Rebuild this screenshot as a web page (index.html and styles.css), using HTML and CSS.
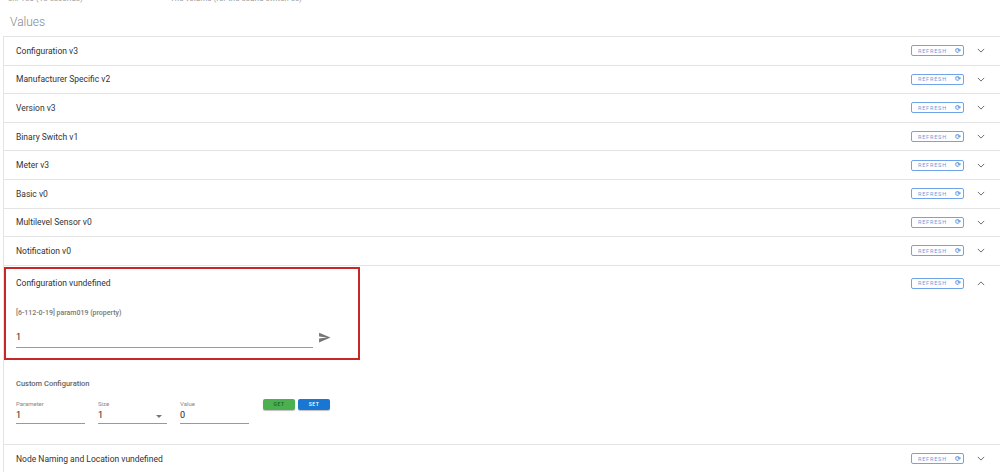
FILE: index.html
```html
<!DOCTYPE html>
<html lang="en">
<head>
  <meta charset="UTF-8">
  <meta name="viewport" content="width=device-width, initial-scale=1.0">
  <title>Node values</title>
  <link rel="stylesheet" href="styles.css">
</head>
<body>

  <div class="linha-topo">
    <span class="topo-a">ch: 180 (18 seconds)</span>
    <span class="topo-b">The volume (for the sound switch cc)</span>
  </div>

  <h2 class="titulo-secao">Values</h2>

  <div class="acordeao">

    <div class="painel">
      <div class="cabecalho">
        <span class="nome">Configuration v3</span>
        <button class="botao-refresh">REFRESH <span class="icone-refresh">&#10227;</span></button>
        <svg class="seta" viewBox="0 0 10 6"><polyline points="1,1 5,5 9,1"/></svg>
      </div>
    </div>

    <div class="painel">
      <div class="cabecalho">
        <span class="nome">Manufacturer Specific v2</span>
        <button class="botao-refresh">REFRESH <span class="icone-refresh">&#10227;</span></button>
        <svg class="seta" viewBox="0 0 10 6"><polyline points="1,1 5,5 9,1"/></svg>
      </div>
    </div>

    <div class="painel">
      <div class="cabecalho">
        <span class="nome">Version v3</span>
        <button class="botao-refresh">REFRESH <span class="icone-refresh">&#10227;</span></button>
        <svg class="seta" viewBox="0 0 10 6"><polyline points="1,1 5,5 9,1"/></svg>
      </div>
    </div>

    <div class="painel">
      <div class="cabecalho">
        <span class="nome">Binary Switch v1</span>
        <button class="botao-refresh">REFRESH <span class="icone-refresh">&#10227;</span></button>
        <svg class="seta" viewBox="0 0 10 6"><polyline points="1,1 5,5 9,1"/></svg>
      </div>
    </div>

    <div class="painel">
      <div class="cabecalho">
        <span class="nome">Meter v3</span>
        <button class="botao-refresh">REFRESH <span class="icone-refresh">&#10227;</span></button>
        <svg class="seta" viewBox="0 0 10 6"><polyline points="1,1 5,5 9,1"/></svg>
      </div>
    </div>

    <div class="painel">
      <div class="cabecalho">
        <span class="nome">Basic v0</span>
        <button class="botao-refresh">REFRESH <span class="icone-refresh">&#10227;</span></button>
        <svg class="seta" viewBox="0 0 10 6"><polyline points="1,1 5,5 9,1"/></svg>
      </div>
    </div>

    <div class="painel">
      <div class="cabecalho">
        <span class="nome">Multilevel Sensor v0</span>
        <button class="botao-refresh">REFRESH <span class="icone-refresh">&#10227;</span></button>
        <svg class="seta" viewBox="0 0 10 6"><polyline points="1,1 5,5 9,1"/></svg>
      </div>
    </div>

    <div class="painel">
      <div class="cabecalho">
        <span class="nome">Notification v0</span>
        <button class="botao-refresh">REFRESH <span class="icone-refresh">&#10227;</span></button>
        <svg class="seta" viewBox="0 0 10 6"><polyline points="1,1 5,5 9,1"/></svg>
      </div>
    </div>

    <!-- painel aberto -->
    <div class="painel aberto">
      <div class="destaque"></div>
      <div class="cabecalho alto">
        <span class="nome">Configuration vundefined</span>
        <button class="botao-refresh">REFRESH <span class="icone-refresh">&#10227;</span></button>
        <svg class="seta" viewBox="0 0 10 6"><polyline points="1,5 5,1 9,5"/></svg>
      </div>

      <div class="detalhes">
        <div class="rotulo-param">[6-112-0-19] param019 (property)</div>
        <div class="linha-valor">
          <div class="campo-texto">1</div>
          <svg class="icone-enviar" viewBox="0 0 24 24"><path d="M2.01 21L23 12 2.01 3 2 10l15 2-15 2z"/></svg>
        </div>

        <div class="titulo-custom">Custom Configuration</div>
        <div class="linha-campos">
          <div class="campo">
            <label>Parameter</label>
            <div class="valor">1</div>
          </div>
          <div class="campo">
            <label>Size</label>
            <div class="valor">1 <span class="triangulo"></span></div>
          </div>
          <div class="campo">
            <label>Value</label>
            <div class="valor">0</div>
          </div>
          <div class="botoes">
            <button class="botao get">GET</button>
            <button class="botao set">SET</button>
          </div>
        </div>
      </div>
    </div>

    <div class="painel">
      <div class="cabecalho">
        <span class="nome">Node Naming and Location vundefined</span>
        <button class="botao-refresh">REFRESH <span class="icone-refresh">&#10227;</span></button>
        <svg class="seta" viewBox="0 0 10 6"><polyline points="1,1 5,5 9,1"/></svg>
      </div>
    </div>

  </div>

</body>
</html>
```

FILE: styles.css
```css
body {
  font-family: Roboto, "Liberation Sans", Arial, sans-serif;
  background-color: #fff;
  margin: 0;
  padding: 0;
  color: #333;
  overflow: hidden;
}

.linha-topo {
  display: flex;
  margin-top: -5px;
  height: 8px;
  font-size: 8px;
  line-height: 8px;
  color: #999;
}

.topo-a {
  margin-left: 8px;
  width: 162px;
}

.titulo-secao {
  margin: 12px 0 0 10px;
  font-size: 12px;
  line-height: 14px;
  font-weight: 300;
  color: #888;
}

.acordeao {
  margin: 7px -10px 0 3px;
  border-top: 1px solid #e4e4e4;
  border-left: 1px solid #e4e4e4;
}

.painel {
  border-bottom: 1px solid #e4e4e4;
}

.painel.aberto {
  position: relative;
}

.cabecalho {
  display: flex;
  align-items: center;
  height: 27.6px;
  padding: 0 25px 0 12px;
}

.cabecalho.alto {
  height: 35px;
}

.nome {
  flex: 1;
  font-size: 8.5px;
  color: #333;
}

.botao-refresh {
  width: 53px;
  height: 11px;
  padding: 0 0 0 6px;
  display: flex;
  align-items: center;
  justify-content: space-between;
  border: 1px solid #6fa5e8;
  border-radius: 2px;
  background: #fff;
  color: #6b9ee0;
  font-family: Roboto, "Liberation Sans", Arial, sans-serif;
  font-size: 5.5px;
  letter-spacing: 0.8px;
  box-sizing: border-box;
}

.icone-refresh {
  font-size: 7px;
  font-weight: bold;
  width: 10px;
  letter-spacing: 0;
}

.seta {
  width: 8px;
  height: 5px;
  margin-left: 13px;
  fill: none;
  stroke: #666;
  stroke-width: 1.2;
}

/* caixa vermelha por cima do painel */
.destaque {
  position: absolute;
  top: 1px;
  left: 0;
  width: 356px;
  height: 93px;
  border: 2px solid #c62828;
  box-sizing: border-box;
  pointer-events: none;
}

.detalhes {
  padding: 7px 12px 20px 12px;
}

.rotulo-param {
  font-size: 7px;
  line-height: 10px;
  font-weight: 500;
  color: #777;
}

.linha-valor {
  display: flex;
  align-items: center;
  margin-top: 8px;
}

.campo-texto {
  width: 297px;
  height: 21px;
  line-height: 22px;
  font-size: 9px;
  color: #222;
  border-bottom: 1px solid #999;
}

.icone-enviar {
  width: 13px;
  height: 13px;
  margin-left: 5px;
  margin-top: 2px;
  fill: #757575;
}

.titulo-custom {
  margin-top: 31px;
  font-size: 7.5px;
  line-height: 10px;
  font-weight: 500;
  color: #666;
}

.linha-campos {
  display: flex;
  margin-top: 10px;
}

.campo {
  width: 69px;
  margin-right: 13px;
}

.campo label {
  display: block;
  font-size: 6px;
  line-height: 9px;
  color: #888;
}

.campo .valor {
  position: relative;
  height: 15px;
  line-height: 15px;
  font-size: 9px;
  color: #222;
  border-bottom: 1px solid #999;
}

.triangulo {
  position: absolute;
  right: 5px;
  top: 7px;
  border-left: 3px solid transparent;
  border-right: 3px solid transparent;
  border-top: 3px solid #777;
}

.botoes {
  display: flex;
  gap: 3px;
  margin-left: 1px;
}

.botao {
  width: 32px;
  height: 11px;
  padding: 0;
  border: none;
  border-radius: 2px;
  font-family: Roboto, "Liberation Sans", Arial, sans-serif;
  font-size: 5px;
  font-weight: 500;
  letter-spacing: 0.6px;
  box-shadow: 0 1px 1px rgba(0, 0, 0, 0.25);
}

.botao.get {
  background-color: #4caf50;
  color: #1f5e22;
}

.botao.set {
  background-color: #1976d2;
  color: #fff;
}
```
